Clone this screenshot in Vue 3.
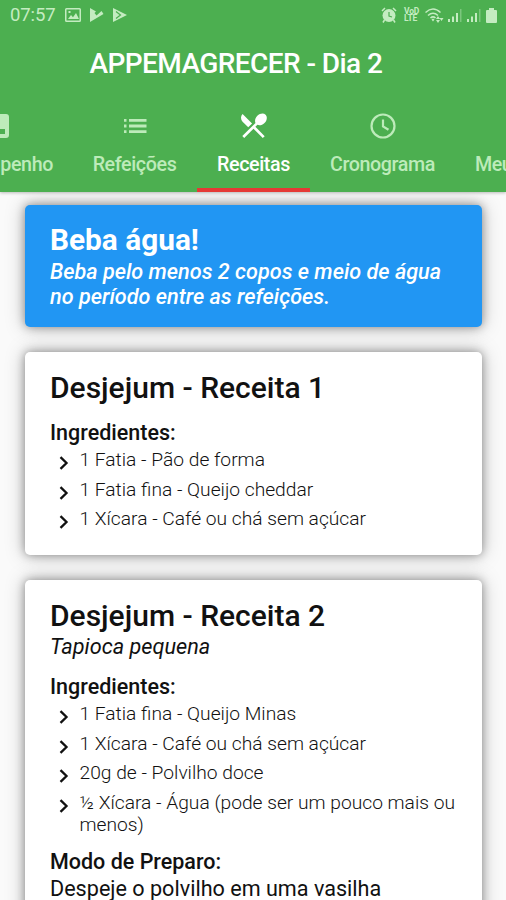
<script setup>
const tabs = [
  { label: 'Desempenho', icon: 'chart', key: 'desempenho' },
  { label: 'Refeições', icon: 'list', key: 'refeicoes' },
  { label: 'Receitas', icon: 'food', key: 'receitas', active: true },
  { label: 'Cronograma', icon: 'clock', key: 'cronograma' },
  { label: 'Meus', icon: '', key: 'meus' },
]
const recipes = [
  {
    title: 'Desjejum - Receita 1',
    items: ['1 Fatia - Pão de forma', '1 Fatia fina - Queijo cheddar', '1 Xícara - Café ou chá sem açúcar'],
  },
  {
    title: 'Desjejum - Receita 2',
    subtitle: 'Tapioca pequena',
    items: [
      '1 Fatia fina - Queijo Minas',
      '1 Xícara - Café ou chá sem açúcar',
      '20g de - Polvilho doce',
      '½ Xícara - Água (pode ser um pouco mais ou menos)',
    ],
    method: 'Despeje o polvilho em uma vasilha',
  },
]
</script>

<template>
  <div class="screen">
    <header class="appbar">
      <div class="status">
        <span class="time">07:57</span>
        <svg class="s-img" viewBox="0 0 16 14"><path fill-rule="evenodd" d="M1.5 0h13A1.5 1.5 0 0 1 16 1.500v11a1.500 1.500 0 0 1-1.500 1.500h-13A1.500 1.500 0 0 1 0 12.500v-11A1.500 1.500 0 0 1 1.500 0zM1.500 1.500v11h13v-11zM3 11l3-4 2 2.300L11 5l3 6zM3.500 3h2v2h-2z" /></svg>
        <svg class="s-play1" viewBox="0 0 14 14"><path d="M0 0l6 3.500-1.500 1.500 2 2.500L11.500 3l2 3L0 14z" /></svg>
        <svg class="s-play2" viewBox="0 0 15 14"><path d="M0 0l14 7L0 14z" /><path d="M3 3.500L7.500 7 3 10.500" class="cut" /></svg>
        <span class="spacer"></span>
        <svg class="s-alarm" viewBox="0 0 16 16"><circle cx="8" cy="8.500" r="6.500" /><path d="M1 4l3-3M15 4l-3-3M3.500 13L2 15.500M12.500 13l1.500 2.500" class="line" /><path d="M8 5v4l3 1" class="cut" /></svg>
        <span class="lte"><span>VoD</span><span>LTE</span></span>
        <svg class="s-wifi" viewBox="0 0 20 15"><path class="line" d="M.5 4.500q7.500-7 15 0M3 7.500q5-4.500 10 0M5.500 10q2.500-2.300 5 0" /><path d="M6.500 11.500l1.500-1 1.500 1-1.500 2zM11 11l2-3 2 3zM14.500 10h4l-2 3zM11 12h4l-2 3z" /></svg>
        <svg class="s-signal" viewBox="0 0 14 14"><path d="M0 11h2v3H0zM4 8.500h2V14H4zM8 5h2v9H8z" /><path d="M12 1h1.500v13H12z" opacity=".4" /></svg>
        <svg class="s-signal second" viewBox="0 0 14 14"><path d="M0 11h2v3H0zM4 8.500h2V14H4zM8 5h2v9H8z" /><path d="M12 1h1.500v13H12z" opacity=".4" /></svg>
        <svg class="s-battery" viewBox="0 0 11 15"><path d="M3 0h5v2h2q1 0 1 1v11q0 1-1 1H1q-1 0-1-1V3q0-1 1-1h2z" /></svg>
      </div>
      <h1>APPEMAGRECER - Dia 2</h1>
      <nav class="tabs">
        <div v-for="tab in tabs" :key="tab.key" class="tab" :class="[tab.key, { active: tab.active }]">
          <svg v-if="tab.icon" class="tab-icon" viewBox="0 0 34 34">
            <path v-if="tab.icon === 'chart'" fill-rule="evenodd" d="M7 5h20q3 0 3 3v18q0 3-3 3H7q-3 0-3-3V8q0-3 3-3zM9 14v11h3V14zM15 10v15h3V10zM21 20v5h5v-5z" />
            <path v-else-if="tab.icon === 'list'" d="M6 10h2.500v2.800H6zM11 10h17.500v2.800H11zM6 15.600h2.500v2.800H6zM11 15.600h17.500v2.800H11zM6 21.200h2.500v2.800H6zM11 21.200h17.500v2.800H11z" />
            <g v-else-if="tab.icon === 'food'" transform="translate(.3 .3) scale(1.35)">
              <path d="M8.100 13.340l2.830-2.830L3.910 3.500a4.008 4.008 0 0 0 0 5.660l4.190 4.180zm6.780-1.810c1.530.710 3.680.210 5.270-1.380 1.910-1.910 2.280-4.650.810-6.120-1.460-1.460-4.200-1.100-6.120.810-1.590 1.590-2.090 3.740-1.380 5.270L3.700 19.870l1.410 1.410L12 14.410l6.880 6.880 1.410-1.410L13.410 13l1.470-1.470z" />
            </g>
            <g v-else class="clock"><circle cx="17" cy="17" r="11.500" /><path d="M17 10.500V17.500l5.500 3.300" /></g>
          </svg>
          <span class="label">{{ tab.label }}</span>
        </div>
      </nav>
    </header>
    <main>
      <section class="card water">
        <h2>Beba água!</h2>
        <p>Beba pelo menos 2 copos e meio de água<br />no período entre as refeições.</p>
      </section>
      <section v-for="recipe in recipes" :key="recipe.title" class="card recipe">
        <h2>{{ recipe.title }}</h2>
        <p v-if="recipe.subtitle" class="subtitle">{{ recipe.subtitle }}</p>
        <h3>Ingredientes:</h3>
        <ul>
          <li v-for="item in recipe.items" :key="item">
            <svg viewBox="0 0 10 14"><path d="M1.500 1.200L7.500 7l-6 5.800" /></svg>
            <span>{{ item }}</span>
          </li>
        </ul>
        <template v-if="recipe.method">
          <h3 class="method-title">Modo de Preparo:</h3>
          <p class="method">{{ recipe.method }}</p>
        </template>
      </section>
    </main>
  </div>
</template>

<style>
body { margin: 0; overflow: hidden; }
</style>

<style scoped>
* { box-sizing: border-box; }
h1, h2, h3, p, ul { margin: 0; padding: 0; }
.screen { width: 506px; height: 900px; overflow: hidden; display: flex; flex-direction: column; background: #fafafa; font-family: Roboto, "Liberation Sans", sans-serif; color: #111; }
.appbar { position: relative; z-index: 1; flex: none; height: 192px; background: #4caf50; color: #fff; box-shadow: 0 1px 3px rgba(0, 0, 0, .25); }
.status { height: 30px; padding: 0 9px 0 10px; display: flex; align-items: center; color: #c4ecc1; }
.status svg { flex: none; fill: currentColor; }
.status .line { fill: none; stroke: currentColor; stroke-width: 1.5; }
.status .cut { fill: none; stroke: #4caf50; stroke-width: 1.2; }
.time { width: 55px; font-size: 18.500px; letter-spacing: -.1px; }
.s-img { width: 16px; height: 14px; }
.s-play1 { width: 14px; height: 14px; margin-left: 9px; }
.s-play2 { width: 15px; height: 14px; margin-left: 9px; }
.spacer { flex: 1; }
.s-alarm { width: 16px; height: 16px; margin-right: 7px; }
.lte { width: 15px; display: flex; flex-direction: column; font-size: 8.500px; font-weight: 700; line-height: 7.500px; letter-spacing: -.2px; margin-right: 6px; }
.s-wifi { width: 20px; height: 15px; margin-right: 3px; }
.s-signal { width: 14px; height: 14px; margin-right: 5px; }
.second { margin-right: 5px; }
.s-battery { width: 11px; height: 15px; }
h1 { height: 66px; padding-left: 89.500px; font-size: 28px; line-height: 67px; font-weight: 500; letter-spacing: -.57px; white-space: nowrap; }
.tabs { display: flex; height: 96px; margin-left: -76px; }
.tab { flex: none; display: flex; flex-direction: column; align-items: center; padding-top: 13px; border-bottom: 4px solid transparent; color: #bdebba; }
.desempenho { width: 149px; padding-right: 5px; }
.desempenho .label { margin-right: -2px; }
.refeicoes { width: 124px; padding-right: 1px; }
.receitas { width: 113px; }
.cronograma { width: 145px; }
.meus { width: 87px; padding-top: 47px; }
.active { color: #fff; border-bottom-color: #e53935; }
.tab-icon { width: 34px; height: 34px; fill: currentColor; }
.clock { fill: none; stroke: currentColor; stroke-width: 2.200; }
.label { font-size: 19.700px; font-weight: 500; line-height: 24px; letter-spacing: -.4px; margin-top: 10px; white-space: nowrap; }
main { padding: 13px 24px 0 25px; display: flex; flex-direction: column; gap: 25px; }
.card { flex: none; border-radius: 5px; background: #fff; padding: 19px 25px 0; box-shadow: 0 0 20px rgba(0, 0, 0, .26), 0 0 10px rgba(0, 0, 0, .34); }
.water { height: 122px; background: #2196f3; color: #fff; padding-top: 18px; }
h2 { font-size: 30px; line-height: 33px; font-weight: 500; white-space: nowrap; }
.water h2 { font-size: 29.800px; font-weight: 700; }
.water p { font-size: 21.650px; line-height: 25px; font-style: italic; font-weight: 500; margin-top: 3px; white-space: nowrap; }
.recipe { height: 203px; }
.recipe:last-child { height: 360px; }
h3 { font-size: 21.500px; line-height: 25px; font-weight: 500; margin-top: 16px; white-space: nowrap; }
.subtitle { font-size: 21.700px; line-height: 25px; font-style: italic; margin-top: 2px; }
.subtitle + h3 { margin-top: 15px; }
ul { list-style: none; margin-top: 4px; display: flex; flex-direction: column; gap: 7px; }
li { display: flex; align-items: flex-start; font-size: 19.220px; line-height: 22.500px; font-weight: 300; color: #111; }
li svg { flex: none; width: 10px; height: 14px; margin: 7px 11px 0 9px; fill: none; stroke: #111; stroke-width: 2.300; }
li span { margin-left: -.5px; margin-right: -3px; }
h3.method-title { margin-top: 12.500px; }
.method { font-size: 21.600px; line-height: 26px; margin-top: 1.500px; white-space: nowrap; }
</style>
